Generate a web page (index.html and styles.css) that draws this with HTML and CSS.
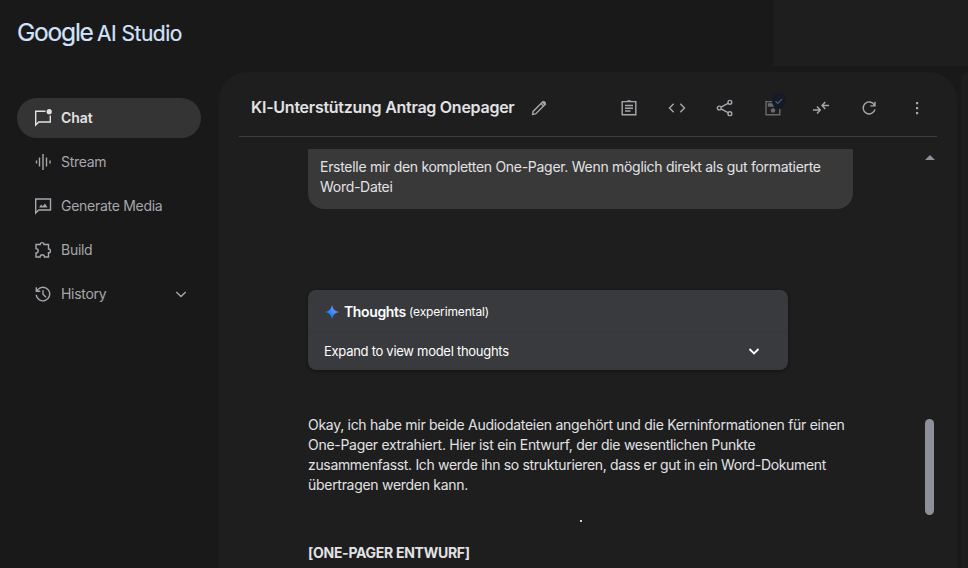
FILE: index.html
```html
<!DOCTYPE html>
<html lang="de">
<head>
<meta charset="utf-8">
<title>Google AI Studio</title>
<link rel="stylesheet" href="styles.css">
</head>
<body>
<div class="app">
  <header class="topbar">
    <div class="logo"><span class="google">Google</span><span class="studio">AI Studio</span></div>
    <div class="topbar-panel"></div>
  </header>
  <div class="workspace">
    <nav class="sidebar">
      <a class="nav-item active">
        <svg class="icon" viewBox="0 0 20 20"><path d="M12.500 3.200H2.700v13.800l3-3h11.600V7.500"/><circle class="solid" cx="16.200" cy="3.700" r="2.600"/></svg>
        <span>Chat</span>
      </a>
      <a class="nav-item">
        <svg class="icon" viewBox="0 0 20 20"><path d="M3.500 8.500v3M6.500 5.500v9M10 2v16M13.500 5.500v9M17 8.500v3"/></svg>
        <span>Stream</span>
      </a>
      <a class="nav-item">
        <svg class="icon" viewBox="0 0 20 20"><path d="M2.700 3h14.800v11H5.700l-3 3z"/><path class="solid" d="M6 11.500l2.200-3 1.600 1.700L12 7.500l2.500 4z"/></svg>
        <span>Generate Media</span>
      </a>
      <a class="nav-item">
        <svg class="icon" viewBox="0 0 20 20"><path d="M3 4.500h4.200a1.900 1.900 0 0 1 3.800 0H15.500V9a1.900 1.900 0 0 1 0 3.800V17H11.500a2.200 2.200 0 0 0-4.400 0H3v-4a2.200 2.200 0 0 0 0-4.400z"/></svg>
        <span>Build</span>
      </a>
      <a class="nav-item">
        <svg class="icon" viewBox="0 0 20 20"><path d="M3.200 10.800A6.800 6.800 0 1 0 4.800 5.600L3.300 7.200M3.300 3.200v4h4M10 6.200v4l3 3"/></svg>
        <span>History</span>
        <svg class="icon expand" viewBox="0 0 20 20"><path d="M5.300 8l4.700 4.600L14.700 8"/></svg>
      </a>
    </nav>
    <main class="panel">
      <div class="toolbar">
        <h1>KI-Unterstützung Antrag Onepager</h1>
        <svg class="icon edit" viewBox="0 0 20 20"><path d="M3.600 16.400l.5-3L13.800 3.700l2.500 2.500L6.600 15.900zM12 5.500L14.500 8"/><path class="solid" d="M12.900 4.600l1.500-1.400q.8-.5 1.500.2l.8.9q.6.700 0 1.400l-1.300 1.400z"/></svg>
        <div class="actions">
          <svg class="icon" viewBox="0 0 20 20"><path d="M3.200 3.600h13.600v13.200H3.200zM6 7.500h8M6 10.200h8M6 13h5.500"/><path class="solid" d="M7 4l1.500-1.800h3L13 4z"/></svg>
          <svg class="icon" viewBox="0 0 20 20"><path d="M6.700 5.800L2.500 10l4.200 4.200M13.300 5.800l4.200 4.200-4.200 4.200"/></svg>
          <svg class="icon" viewBox="0 0 20 20"><path d="M6 9.200l7.500-4.100M6 10.800l7.500 4.100"/><circle cx="4.300" cy="10" r="1.900"/><circle cx="14.900" cy="4.300" r="1.900"/><circle cx="14.900" cy="15.700" r="1.900"/></svg>
          <span class="save">
            <svg class="icon" viewBox="0 0 20 20"><path d="M3 3.600h11l2.800 2.800v10.400H3z"/><path class="solid" d="M4.800 5.200h8v3.500h-8z"/><circle class="solid" cx="10" cy="12.500" r="2.200"/></svg>
            <span class="badge"><svg viewBox="0 0 12 12"><path d="M2.500 6.200l2.300 2.100L9 3.800"/></svg></span>
          </span>
          <svg class="icon" viewBox="0 0 20 20"><path d="M2 12h7M6 8.500L9.300 12 6 15.500M18 7.500h-7M14.300 4L11 7.500l3.300 3.500"/></svg>
          <svg class="icon" viewBox="0 0 20 20"><path d="M15.400 7A6 6 0 1 0 16 11.300M16 3.700v4.200h-4.700"/></svg>
          <svg class="icon" viewBox="0 0 20 20"><path class="solid" d="M9 4h2.200v2.200H9zM9 9h2.200v2.200H9zM9 14h2.200v2.200H9z"/></svg>
        </div>
      </div>
      <div class="conversation">
        <div class="turns">
          <div class="prompt"><span class="line">Erstelle mir den kompletten One-Pager. Wenn möglich direkt als gut formatierte</span><span class="line">Word-Datei</span></div>
          <section class="thoughts">
            <div class="thoughts-title">
              <svg class="spark" viewBox="0 0 14 14"><defs><linearGradient id="spark" x1="0" y1="1" x2="1" y2="0"><stop offset=".35" stop-color="#1683ff"/><stop offset=".8" stop-color="#9b8fe8"/></linearGradient></defs><path fill="url(#spark)" d="M7 0Q8 6 14 7Q8 8 7 14Q6 8 0 7Q6 6 7 0z"/></svg>
              <strong>Thoughts</strong><small>(experimental)</small>
            </div>
            <div class="thoughts-toggle"><span>Expand to view model thoughts</span>
              <svg class="icon" viewBox="0 0 20 20"><path d="M5.500 8l4.500 4.500L14.500 8"/></svg></div>
          </section>
          <div class="answer">
            <span class="line">Okay, ich habe mir beide Audiodateien angehört und die Kerninformationen für einen</span>
            <span class="line">One-Pager extrahiert. Hier ist ein Entwurf, der die wesentlichen Punkte</span>
            <span class="line tight">zusammenfasst. Ich werde ihn so strukturieren, dass er gut in ein Word-Dokument</span>
            <span class="line">übertragen werden kann.</span>
          </div>
          <div class="separator"></div>
          <h2>[ONE-PAGER ENTWURF]</h2>
        </div>
        <div class="scrollbar"><div class="arrow"></div><div class="thumb"></div></div>
      </div>
    </main>
    <aside class="settings"></aside>
  </div>
</div>
</body>
</html>
```
FILE: styles.css
```css
* { box-sizing: border-box; }
body {
  margin: 0;
  background: #191919;
  color: #e2e2e5;
  font: 14px/20px Inter, sans-serif;
  letter-spacing: -0.28px;
}
.app { width: 968px; height: 568px; overflow: hidden; display: flex; flex-direction: column; }
.topbar { height: 72px; flex: none; display: flex; justify-content: space-between; }
.logo { display: flex; padding: 16px 0 0 17px; color: #d3e3fd; white-space: nowrap; line-height: 33px; }
.google { font-size: 24.5px; width: 80px; letter-spacing: -1.2px; -webkit-text-stroke: 0.2px; }
.studio { font-size: 21px; letter-spacing: -0.5px; line-height: 35px; -webkit-text-stroke: 0.2px; }
.topbar-panel { width: 195px; height: 66px; background: #1e1e1e; }
.workspace { flex: 1; min-height: 0; display: flex; }
.sidebar { width: 219px; flex: none; padding: 26px 18px 0 17px; display: flex; flex-direction: column; gap: 4px; }
.nav-item { height: 40px; border-radius: 20px; padding: 0 10px 0 16px; display: flex; align-items: center; gap: 8px; color: #a6a7ac; white-space: nowrap; }
.nav-item.active { background: #343434; color: #e2e2e2; font-weight: 600; letter-spacing: -0.1px; }
.icon { width: 20px; height: 20px; flex: none; fill: none; stroke: currentColor; stroke-width: 1.4; }
.icon .solid { fill: currentColor; stroke: none; }
.expand { margin-left: auto; }
.panel { width: 738px; flex: none; background: #1e1e1e; border-radius: 28px 28px 0 0; display: flex; flex-direction: column; }
.toolbar { height: 65px; flex: none; margin: 0 20px; border-bottom: 1px solid #3d3d3d; padding: 7px 10px 0 12px; display: flex; align-items: center; }
h1 { margin: -2px 0 0; font-size: 16px; font-weight: 600; width: 278px; white-space: nowrap; letter-spacing: -0.26px; color: #e2e2e5; }
.edit { color: #a6a7ac; }
.actions { margin-left: auto; display: flex; gap: 28px; color: #a6a7ac; }
.save { position: relative; height: 20px; }
.save .icon { color: #6a6a6c; }
.badge { position: absolute; left: 9px; top: -5px; width: 14px; height: 16px; border-radius: 50%; background: #141a26; display: flex; align-items: center; justify-content: center; }
.badge svg { width: 12px; height: 12px; fill: none; stroke: #4b5a75; stroke-width: 1.2; }
.conversation { flex: 1; min-height: 0; padding-top: 12px; display: flex; justify-content: space-between; }
.turns { width: 545px; margin-left: 89px; display: flex; flex-direction: column; }
.line { display: block; white-space: nowrap; letter-spacing: -0.29px; }
.line.tight { letter-spacing: -0.33px; }
.prompt { height: 60px; background: #393939; border-radius: 0 0 16px 16px; padding: 8px 12px 12px; }
.thoughts { width: 480px; height: 80px; margin-top: 81px; background: #393a3d; border-radius: 8px; box-shadow: 0 1px 3px #111; color: #fff; white-space: nowrap; }
.thoughts-title { height: 43px; padding: 1px 17px 0; display: flex; align-items: center; border-bottom: 1px solid #37373b; }
.thoughts-toggle { height: 36px; padding: 0 24px 0 16px; display: flex; align-items: center; justify-content: space-between; font-size: 13px; }
.thoughts-toggle .icon { stroke-width: 1.8; }
.spark { width: 14px; height: 14px; margin-right: 5px; }
strong { font-weight: 600; width: 65px; letter-spacing: -0.38px; }
small { font-size: 12px; letter-spacing: -0.15px; }
.answer { margin-top: 45px; }
.separator { width: 2px; height: 2px; margin: 25px 0 0 272px; background: #d0d0d0; }
h2 { margin: 21px 0 0; font-size: 14px; line-height: 20px; font-weight: 700; white-space: nowrap; }
.scrollbar { width: 9px; margin-right: 23px; display: flex; flex-direction: column; align-items: center; padding-top: 6px; }
.arrow { border: solid transparent; border-width: 0 5px 5px; border-bottom-color: #8e9099; }
.thumb { width: 9px; height: 96px; margin-top: 259px; border-radius: 5px; background: #8e9099; }
.settings { flex: 1; margin-left: 4px; background: #1e1e1e; border-top-left-radius: 28px; }
```
